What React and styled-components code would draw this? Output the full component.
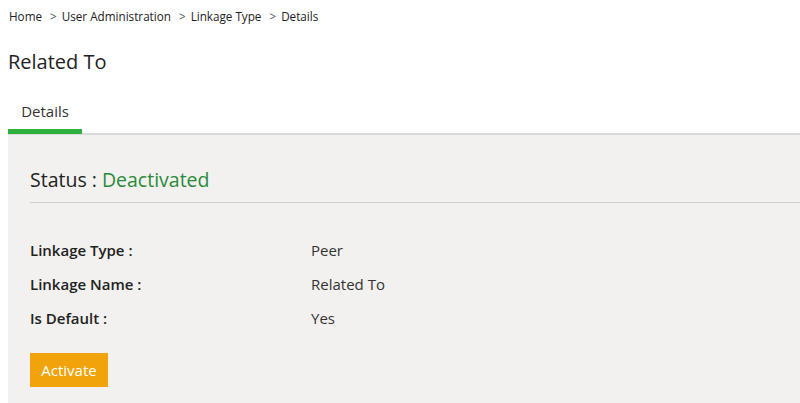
import React from "react";
import styled, { createGlobalStyle } from "styled-components";

const Global = createGlobalStyle`
  html, body { margin: 0; padding: 0; background: #fff; overflow: hidden; }
  body { font-family: "Open Sans", "Noto Sans", sans-serif; color: #222; }
`;

const Page = styled.div`
  padding: 0 0 0 8px;
  display: flex;
  flex-direction: column;
`;

const Breadcrumb = styled.nav`
  display: flex;
  align-items: center;
  gap: 5px;
  font-size: 11.7px;
  height: 16px;
  margin-top: 8px;
  padding-left: 1px;
  color: #222;
`;

const Sep = styled.span`
  color: #555;
  margin-left: 3px;
`;

const Title = styled.h1`
  margin: 26px 0 0 0;
  font-size: 20px;
  font-weight: 400;
  line-height: 24px;
  color: #222;
`;

const Tabs = styled.div`
  display: flex;
  margin-top: 28px;
  border-bottom: 2px solid #dadada;
`;

const Tab = styled.div`
  width: 74px;
  text-align: center;
  font-size: 15px;
  color: #333;
  padding-bottom: 9px;
  line-height: 18px;
  border-bottom: 5px solid ${(p) => (p.$active ? "#2eb03c" : "transparent")};
  margin-bottom: -1px;
`;

const Panel = styled.section`
  background: #f2f1f0;
  padding: 0 0 16px 22px;
  min-height: 280px;
`;

const StatusRow = styled.div`
  font-size: 19.5px;
  line-height: 24px;
  padding: 33px 0 10px 0;
  border-bottom: 1px solid #cfcfcf;
  color: #222;
`;

const StatusValue = styled.span`
  color: #2a8a3a;
`;

const Rows = styled.dl`
  margin: 37px 0 0 0;
  display: grid;
  grid-template-columns: 281px 1fr;
  row-gap: 14px;
  font-size: 15px;
  line-height: 20px;
`;

const Label = styled.dt`
  font-weight: 600;
  color: #222;
`;

const Value = styled.dd`
  margin: 0;
  color: #333;
`;

const Button = styled.button`
  margin-top: 25px;
  width: 78px;
  height: 34px;
  border: none;
  background: #f0a30a;
  color: #fff;
  font-family: inherit;
  font-size: 15px;
  padding: 0;
  cursor: pointer;
`;

export default function App() {
  return (
    <>
      <Global />
      <Page>
        <Breadcrumb>
          <span>Home</span>
          <Sep>&gt;</Sep>
          <span>User Administration</span>
          <Sep>&gt;</Sep>
          <span>Linkage Type</span>
          <Sep>&gt;</Sep>
          <span>Details</span>
        </Breadcrumb>
        <Title>Related To</Title>
        <Tabs>
          <Tab $active>Details</Tab>
        </Tabs>
        <Panel>
          <StatusRow>
            Status : <StatusValue>Deactivated</StatusValue>
          </StatusRow>
          <Rows>
            <Label>Linkage Type :</Label>
            <Value>Peer</Value>
            <Label>Linkage Name :</Label>
            <Value>Related To</Value>
            <Label>Is Default :</Label>
            <Value>Yes</Value>
          </Rows>
          <Button>Activate</Button>
        </Panel>
      </Page>
    </>
  );
}
